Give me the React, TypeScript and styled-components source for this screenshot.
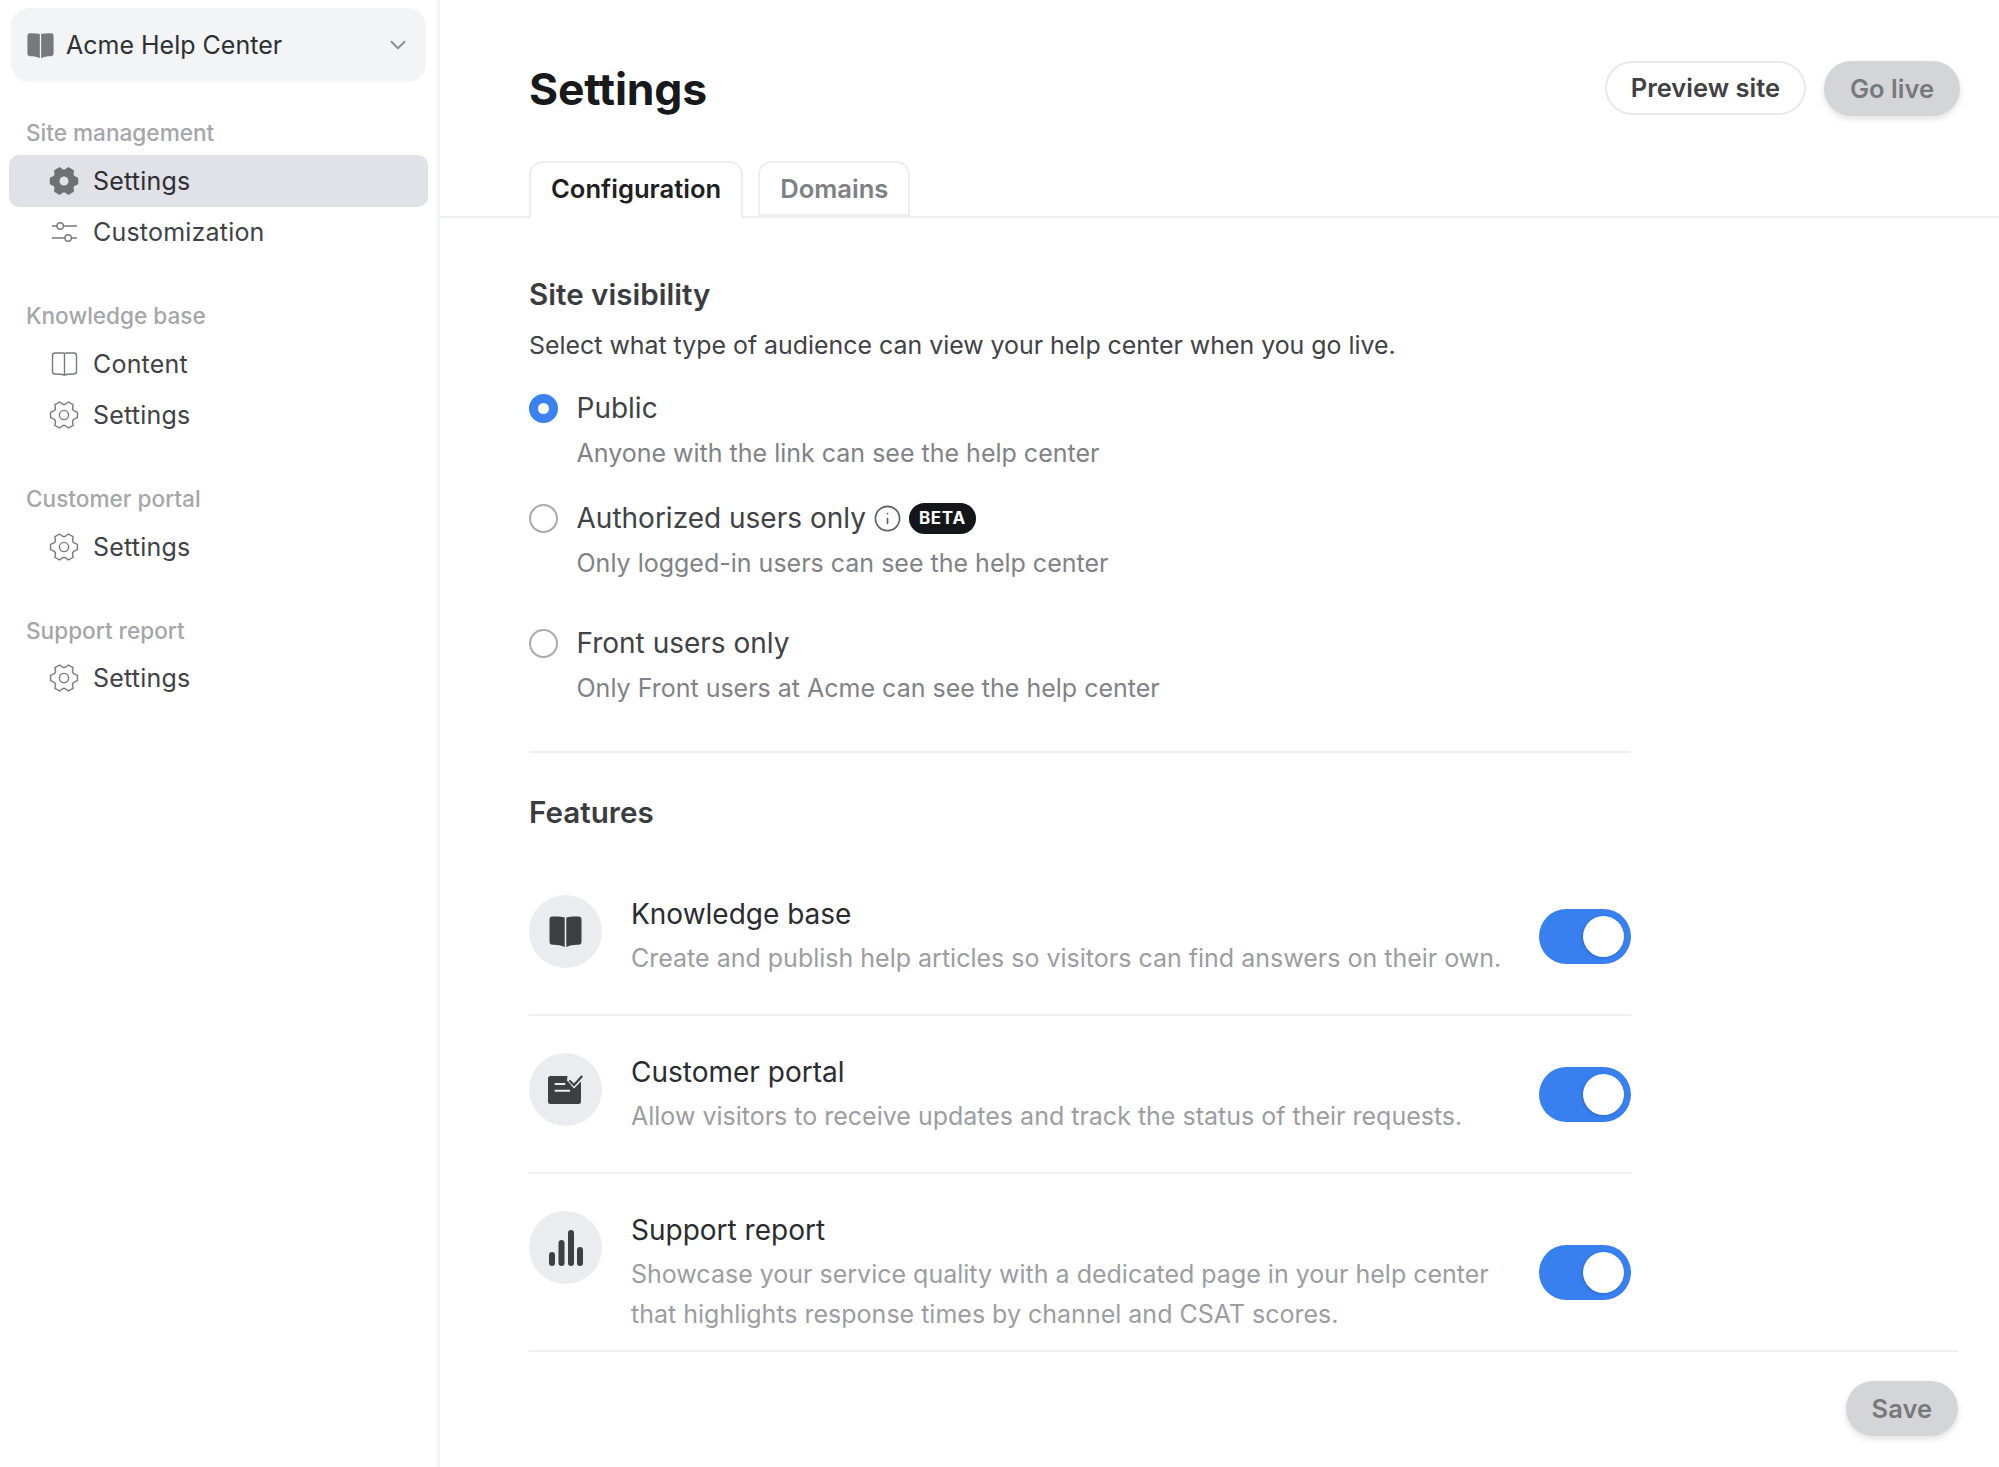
import { FC, ReactNode } from "react";
import styled, { createGlobalStyle } from "styled-components";
import { ChevronDown, Info } from "lucide-react";

const GlobalStyle = createGlobalStyle`
  html, body {
    margin: 0;
    padding: 0;
    background: #fff;
  }
  body {
    font-family: "Inter", "Liberation Sans", sans-serif;
    color: #3f4145;
  }
  * {
    box-sizing: border-box;
  }
`;

const Page = styled.div`
  display: flex;
  width: 100%;
  height: 1467px;
  overflow: hidden;
`;

const Sidebar = styled.aside`
  width: 440px;
  flex: none;
  padding-top: 8px;
  border-right: 3px solid #f3f4f7;
`;

const Switcher = styled.div`
  display: flex;
  align-items: center;
  height: 74px;
  margin: 0 11px;
  padding: 0 15px 0 16px;
  gap: 12px;
  background: #f3f4f6;
  border-radius: 18px;
  color: #77797d;
`;

const SwitcherName = styled.span`
  flex: 1;
  font-size: 25px;
  color: #2e3033;
`;

const NavSection = styled.section`
  margin-top: 43px;
  &:first-of-type {
    margin-top: 36px;
  }
`;

const NavLabel = styled.div`
  height: 30px;
  margin-bottom: 7px;
  padding-left: 26px;
  font-size: 22.6px;
  font-weight: 500;
  line-height: 30px;
  color: #a4a6aa;
`;

const NavRow = styled.div<{ $active?: boolean }>`
  display: flex;
  align-items: center;
  height: 51.5px;
  margin: 0 9px 0 9px;
  padding-left: 40px;
  gap: 14px;
  border-radius: 10px;
  font-size: 25px;
  letter-spacing: 0.2px;
  color: ${(p) => (p.$active ? "#2e3033" : "#404246")};
  background: ${(p) => (p.$active ? "#e1e2e7" : "transparent")};
`;

const NavIcon = styled.span<{ $active?: boolean }>`
  display: flex;
  width: 30px;
  height: 30px;
  color: ${(p) => (p.$active ? "#6f7175" : "#77797d")};
`;

const Main = styled.main`
  flex: 1;
  min-width: 0;
  display: flex;
  flex-direction: column;
`;

const Header = styled.header`
  display: flex;
  align-items: center;
  height: 54px;
  margin: 61px 39px 46px 89px;
  gap: 18px;
`;

const Title = styled.h1`
  flex: 1;
  margin: 2px 0 0;
  font-size: 44.5px;
  font-weight: 700;
  letter-spacing: -0.2px;
  color: #18191b;
`;

const PillButton = styled.button<{ $outline?: boolean }>`
  height: ${(p) => (p.$outline ? "54px" : "55px")};
  padding: 0 ${(p) => (p.$outline ? "24px 2px" : "26px")};
  border: ${(p) => (p.$outline ? "2px solid #e7e8ea" : "none")};
  border-radius: 28px;
  font-family: inherit;
  font-size: 25.5px;
  font-weight: 600;
  color: ${(p) => (p.$outline ? "#3f4145" : "#77797d")};
  background: ${(p) => (p.$outline ? "#fff" : "#d4d5d9")};
  box-shadow: ${(p) => (p.$outline ? "none" : "0 3px 6px rgba(0, 0, 0, 0.12)")};
`;

const TabBar = styled.nav`
  display: flex;
  height: 57px;
  padding-left: 89px;
  gap: 15px;
  border-bottom: 2px solid #eceef1;
`;

const Tab = styled.div<{ $active?: boolean }>`
  height: ${(p) => (p.$active ? "57px" : "55px")};
  padding: 0 20px;
  border: 2px solid #eceef1;
  border-bottom: ${(p) => (p.$active ? "none" : "2px solid #eceef1")};
  border-radius: 14px 14px 0 0;
  font-size: 25.6px;
  font-weight: 600;
  line-height: 52px;
  color: ${(p) => (p.$active ? "#1f2022" : "#7e8084")};
  background: #fff;
`;

const Content = styled.div`
  padding: 0 41px 0 89px;
`;

const Narrow = styled.div`
  width: 1102px;
`;

const SectionTitle = styled.h2<{ $top: number }>`
  margin: ${(p) => p.$top}px 0 0;
  font-size: 29.6px;
  font-weight: 600;
  line-height: 36px;
  color: #3a3c3f;
`;

const SectionText = styled.p`
  margin: 17px 0 29px;
  font-size: 24.9px;
  line-height: 32px;
  color: #404246;
`;

const RadioOption = styled.div<{ $bottom: number }>`
  display: grid;
  grid-template-columns: 29px 1fr;
  column-gap: 18.5px;
  row-gap: 11px;
  align-items: center;
  margin-bottom: ${(p) => p.$bottom}px;
`;

const Radio = styled.span<{ $checked?: boolean }>`
  display: flex;
  align-items: center;
  justify-content: center;
  width: 29px;
  height: 29px;
  border-radius: 50%;
  border: ${(p) => (p.$checked ? "none" : "2px solid #a9aaae")};
  background: ${(p) => (p.$checked ? "#3b82f0" : "#fff")};
  &::after {
    content: "";
    display: ${(p) => (p.$checked ? "block" : "none")};
    width: 11px;
    height: 11px;
    border-radius: 50%;
    background: #fff;
  }
`;

const RadioLabel = styled.div`
  display: flex;
  align-items: center;
  height: 36px;
  gap: 7px;
  font-size: 28px;
  color: #404246;
`;

const RadioHint = styled.div`
  grid-column: 2;
  font-size: 25px;
  line-height: 32px;
  color: #808286;
`;

const InfoIcon = styled(Info)`
  width: 29px;
  height: 29px;
  color: #5f6165;
`;

const BetaBadge = styled.span`
  display: inline-flex;
  align-items: center;
  height: 31px;
  padding: 0 10px;
  border-radius: 16px;
  font-size: 17px;
  font-weight: 700;
  letter-spacing: 0.7px;
  color: #fff;
  background: #15161a;
`;

const Divider = styled.hr`
  height: 2px;
  margin: 0;
  border: none;
  background: #eff0f2;
`;

const FeatureList = styled.div`
  margin-top: 28px;
`;

const FeatureRow = styled.div`
  display: flex;
  align-items: center;
  padding: 37px 0 36px;
  gap: 29px;
  border-bottom: 2px solid #eff0f2;
  &:last-child {
    padding-bottom: 16px;
    border-bottom: none;
  }
`;

const FeatureCircle = styled.span`
  display: flex;
  align-items: center;
  justify-content: center;
  flex: none;
  align-self: flex-start;
  width: 73px;
  height: 73px;
  border-radius: 50%;
  color: #3d3f42;
  background: #ebecef;
`;

const FeatureText = styled.div`
  flex: 1;
  min-width: 0;
`;

const FeatureTitle = styled.div`
  margin-top: 1px;
  margin-bottom: 6px;
  font-size: 28px;
  line-height: 36px;
  color: #2a2c2f;
`;

const FeatureDescription = styled.div`
  font-size: 25px;
  line-height: 40px;
  color: #9b9da1;
`;

const Toggle = styled.span`
  display: flex;
  align-items: center;
  justify-content: flex-end;
  flex: none;
  width: 92px;
  height: 55px;
  padding-right: 7px;
  border-radius: 28px;
  background: #3880f0;
  &::after {
    content: "";
    width: 41px;
    height: 41px;
    border-radius: 50%;
    background: #fff;
    box-shadow: -1px 1px 3px rgba(0, 0, 0, 0.18);
  }
`;

const Footer = styled.footer`
  display: flex;
  justify-content: flex-end;
  padding-top: 29px;
  border-top: 2px solid #eff0f2;
`;

// front-style cog: six rounded teeth, one pointing left and right
const gearPath = (cx: number, cy: number, outer: number, inner: number) => {
  const points: string[] = [];
  for (let i = 0; i < 6; i++) {
    const a = (i * Math.PI) / 3;
    [
      [inner, -0.42],
      [outer, -0.2],
      [outer, 0.2],
      [inner, 0.42],
    ].forEach(([r, d]) => {
      const x = cx + r * Math.cos(a + d);
      const y = cy + r * Math.sin(a + d);
      points.push(x.toFixed(2) + " " + y.toFixed(2));
    });
  }
  return "M" + points.join("L") + "Z";
};

const GearIcon: FC<{ filled?: boolean }> = ({ filled }) => (
  <svg width="30" height="30" viewBox="0 0 30 30">
    {filled ? (
      <>
        <path
          d={gearPath(15, 15, 13.5, 10.5)}
          fill="currentColor"
          stroke="currentColor"
          strokeWidth="2"
          strokeLinejoin="round"
        />
        <circle cx="15" cy="15" r="4.5" fill="#e1e2e7" />
      </>
    ) : (
      <>
        <path
          d={gearPath(15, 15, 13.7, 10.5)}
          fill="none"
          stroke="currentColor"
          strokeWidth="1.4"
          strokeLinejoin="round"
        />
        <circle cx="15" cy="15" r="4.6" fill="none" stroke="currentColor" strokeWidth="1.4" />
      </>
    )}
  </svg>
);

const SlidersIcon: FC = () => (
  <svg width="30" height="30" viewBox="0 0 30 30" fill="none" stroke="currentColor" strokeWidth="1.4">
    <path d="M3 9h5M14.5 9H28" />
    <circle cx="11.2" cy="9" r="3.2" />
    <path d="M3 21h13M22.5 21H28" />
    <circle cx="19.2" cy="21" r="3.2" />
  </svg>
);

const BookOutlineIcon: FC = () => (
  <svg width="30" height="30" viewBox="0 0 30 30" fill="none" stroke="currentColor" strokeWidth="1.4">
    <path d="M6 4h8c.8 0 1.5.4 1.500 1 0-.6.7-1 1.500-1h8a2.500 2.500 0 0 1 2.500 2.500v16a2.500 2.500 0 0 1-2.500 2.500c-3.500 0-7 .2-9.500 1-2.500-.8-6-1-9.500-1A2.500 2.500 0 0 1 3.500 22.500v-16A2.500 2.500 0 0 1 6 4Z" />
    <path d="M15.500 5v21" />
  </svg>
);

const BookFilledIcon: FC<{ size: number }> = ({ size }) => (
  <svg width={size} height={size} viewBox="0 0 33 33" fill="currentColor">
    <path d="M3.500 1.500c4-.3 8.500 0 12.200 1v29.500c-3.700-1.800-8.200-2.500-12.200-2.300A3 3 0 0 1 .5 26.700v-22.200a3 3 0 0 1 3-3Z" />
    <path d="M29.500 1.500c-4-.3-8.500 0-12.200 1v29.500c3.700-1.800 8.200-2.500 12.200-2.300a3 3 0 0 0 3-3v-22.200a3 3 0 0 0-3-3Z" />
  </svg>
);

const PortalIcon: FC = () => (
  <svg width="35" height="30" viewBox="0 0 35 30" fill="none">
    <path
      d="M2.500 1H19.500L19 5.500L26 13.500L33 6.500V26.500A2.500 2.500 0 0 1 30.500 29H2.500A2.500 2.500 0 0 1 0 26.500V3.500A2.500 2.500 0 0 1 2.500 1Z"
      fill="currentColor"
    />
    <path d="M6.700 9H17.300M6.700 15.700H22" stroke="#ebecef" strokeWidth="2" />
    <path d="M21.300 5.500L26 10L34.200 1" stroke="currentColor" strokeWidth="2.200" />
  </svg>
);

const BarsIcon: FC = () => (
  <svg width="34" height="36" viewBox="0 0 34 36" fill="currentColor">
    <rect x="0" y="22" width="6" height="14" rx="3" />
    <rect x="9.500" y="10" width="6" height="26" rx="3" />
    <rect x="19" y="0" width="6" height="36" rx="3" />
    <rect x="28" y="17" width="6" height="19" rx="3" />
  </svg>
);

interface NavItem {
  label: string;
  icon: ReactNode;
  active?: boolean;
}

const NAV: { title: string; items: NavItem[] }[] = [
  {
    title: "Site management",
    items: [
      { label: "Settings", icon: <GearIcon filled />, active: true },
      { label: "Customization", icon: <SlidersIcon /> },
    ],
  },
  {
    title: "Knowledge base",
    items: [
      { label: "Content", icon: <BookOutlineIcon /> },
      { label: "Settings", icon: <GearIcon /> },
    ],
  },
  { title: "Customer portal", items: [{ label: "Settings", icon: <GearIcon /> }] },
  { title: "Support report", items: [{ label: "Settings", icon: <GearIcon /> }] },
];

const FEATURES = [
  {
    title: "Knowledge base",
    icon: <BookFilledIcon size={33} />,
    text: "Create and publish help articles so visitors can find answers on their own.",
  },
  {
    title: "Customer portal",
    icon: <PortalIcon />,
    text: "Allow visitors to receive updates and track the status of their requests.",
  },
  {
    title: "Support report",
    icon: <BarsIcon />,
    text: (
      <>
        Showcase your service quality with a dedicated page in your help center
        <br />
        that highlights response times by channel and CSAT scores.
      </>
    ),
  },
];

const App: FC = () => {
  return (
    <Page>
      <GlobalStyle />
      <Sidebar>
        <Switcher>
          <BookFilledIcon size={27} />
          <SwitcherName>Acme Help Center</SwitcherName>
          <ChevronDown size={26} strokeWidth={1.8} color="#8c8e92" />
        </Switcher>
        {NAV.map((section) => (
          <NavSection key={section.title}>
            <NavLabel>{section.title}</NavLabel>
            {section.items.map((item) => (
              <NavRow key={item.label} $active={item.active}>
                <NavIcon $active={item.active}>{item.icon}</NavIcon>
                {item.label}
              </NavRow>
            ))}
          </NavSection>
        ))}
      </Sidebar>
      <Main>
        <Header>
          <Title>Settings</Title>
          <PillButton $outline>Preview site</PillButton>
          <PillButton>Go live</PillButton>
        </Header>
        <TabBar>
          <Tab $active>Configuration</Tab>
          <Tab>Domains</Tab>
        </TabBar>
        <Content>
          <Narrow>
            <SectionTitle $top={58}>Site visibility</SectionTitle>
            <SectionText>Select what type of audience can view your help center when you go live.</SectionText>
            <RadioOption $bottom={31}>
              <Radio $checked />
              <RadioLabel>Public</RadioLabel>
              <RadioHint>Anyone with the link can see the help center</RadioHint>
            </RadioOption>
            <RadioOption $bottom={46}>
              <Radio />
              <RadioLabel>
                Authorized users only
                <InfoIcon strokeWidth={1.4} />
                <BetaBadge>BETA</BetaBadge>
              </RadioLabel>
              <RadioHint>Only logged-in users can see the help center</RadioHint>
            </RadioOption>
            <RadioOption $bottom={47}>
              <Radio />
              <RadioLabel>Front users only</RadioLabel>
              <RadioHint>Only Front users at Acme can see the help center</RadioHint>
            </RadioOption>
            <Divider />
            <SectionTitle $top={41}>Features</SectionTitle>
            <FeatureList>
              {FEATURES.map((feature) => (
                <FeatureRow key={feature.title}>
                  <FeatureCircle>{feature.icon}</FeatureCircle>
                  <FeatureText>
                    <FeatureTitle>{feature.title}</FeatureTitle>
                    <FeatureDescription>{feature.text}</FeatureDescription>
                  </FeatureText>
                  <Toggle />
                </FeatureRow>
              ))}
            </FeatureList>
          </Narrow>
          <Footer>
            <PillButton>Save</PillButton>
          </Footer>
        </Content>
      </Main>
    </Page>
  );
};

export default App;
